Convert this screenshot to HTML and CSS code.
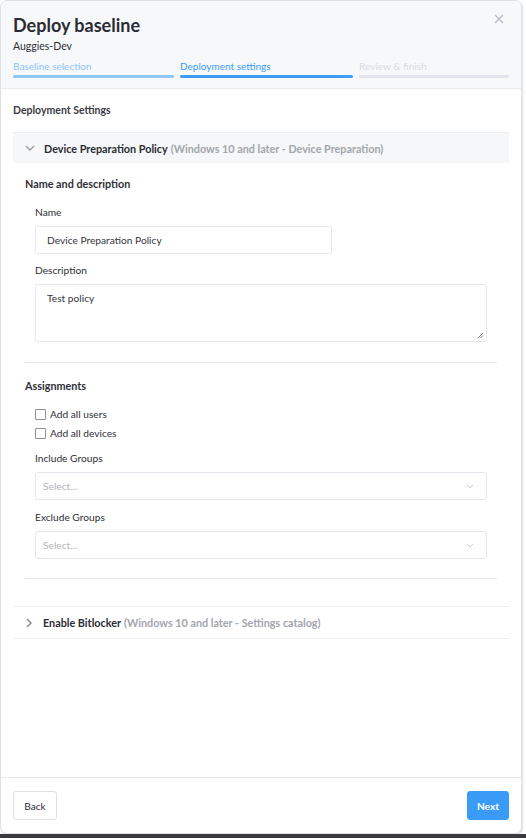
FILE: index.html
```html
<!DOCTYPE html>
<html>
<head>
<meta charset="utf-8">
<link rel="stylesheet" href="styles.css">
</head>
<body>
<div class="modal">
  <div class="modal-header">
    <button class="close" aria-label="Close">
      <svg width="10" height="10" viewBox="0 0 10 10"><path d="M1 1L9 9M9 1L1 9" stroke="#b9bcc4" stroke-width="1.3" fill="none"/></svg>
    </button>
    <h1 class="title">Deploy baseline</h1>
    <div class="subtitle">Auggies-Dev</div>
    <div class="steps">
      <div class="step done"><span>Baseline selection</span><i></i></div>
      <div class="step active"><span>Deployment settings</span><i></i></div>
      <div class="step todo"><span>Review &amp; finish</span><i></i></div>
    </div>
  </div>

  <div class="modal-body">
    <div class="section-title">Deployment Settings</div>

    <div class="accordion open">
      <div class="acc-head">
        <svg class="chev" width="10" height="6" viewBox="0 0 10 6"><path d="M1 1L5 5L9 1" stroke="#9a9ca3" stroke-width="1.4" fill="none"/></svg>
        <span class="acc-name">Device Preparation Policy</span>
        <span class="acc-type">(Windows 10 and later - Device Preparation)</span>
      </div>
      <div class="acc-body">
        <div class="group-title">Name and description</div>
        <div class="fields">
          <label class="label">Name</label>
          <div class="input name-input">Device Preparation Policy</div>
          <label class="label">Description</label>
          <div class="input textarea">Test policy
            <svg class="grip" width="7" height="7" viewBox="0 0 7 7"><path d="M6 1L1 6M6 3.5L3.5 6" stroke="#666" stroke-width="0.8"/></svg>
          </div>
        </div>
        <hr class="divider">
        <div class="group-title">Assignments</div>
        <div class="fields">
          <div class="checks">
            <label class="check"><span class="box"></span>Add all users</label>
            <label class="check"><span class="box"></span>Add all devices</label>
          </div>
          <label class="label">Include Groups</label>
          <div class="input select"><span>Select...</span>
            <svg width="8" height="5" viewBox="0 0 8 5"><path d="M1 1L4 4L7 1" stroke="#c8cad0" stroke-width="1" fill="none"/></svg>
          </div>
          <label class="label">Exclude Groups</label>
          <div class="input select"><span>Select...</span>
            <svg width="8" height="5" viewBox="0 0 8 5"><path d="M1 1L4 4L7 1" stroke="#c8cad0" stroke-width="1" fill="none"/></svg>
          </div>
        </div>
        <hr class="divider last">
      </div>
    </div>

    <div class="accordion closed">
      <div class="acc-head">
        <svg class="chev" width="10" height="10" viewBox="0 0 10 10"><path d="M3 1L7 5L3 9" stroke="#8c8e95" stroke-width="1.5" fill="none"/></svg>
        <span class="acc-name">Enable Bitlocker</span>
        <span class="acc-type">(Windows 10 and later - Settings catalog)</span>
      </div>
    </div>
  </div>

  <div class="modal-footer">
    <button class="btn btn-back">Back</button>
    <button class="btn btn-next">Next</button>
  </div>
</div>
<div class="backdrop-strip"></div>
</body>
</html>
```

FILE: styles.css
```css
* { box-sizing: border-box; }
html, body { margin: 0; padding: 0; }
body {
  background: #ffffff;
  font-family: Lato, "Noto Sans", sans-serif;
  color: #2e2f36;
  width: 526px;
  height: 838px;
  overflow: hidden;
  display: flex;
  flex-direction: column;
}
.modal {
  width: 522px;
  height: 834px;
  border: 1px solid #dfe0e5;
  border-radius: 7px;
  background: #fff;
  display: flex;
  flex-direction: column;
  overflow: hidden;
  box-shadow: 1px 1px 2px rgba(0,0,0,0.12);
}
.backdrop-strip {
  flex: 1;
  background: #3b3b3d;
}
.modal-header {
  position: relative;
  background: #f7f8fa;
  border-bottom: 1px solid #e9eaee;
  padding: 12px 12px 10px 12px;
}
.close {
  position: absolute;
  right: 17px;
  top: 13px;
  border: 0;
  background: transparent;
  padding: 0;
  width: 10px;
  height: 10px;
  display: flex;
}
.title {
  margin: 0;
  font-size: 18px;
  line-height: 24px;
  font-weight: 700;
  color: #2b2c33;
}
.subtitle {
  margin-top: 2px;
  font-size: 10.5px;
  line-height: 14px;
  color: #2e2f36;
}
.steps {
  display: flex;
  gap: 6px;
  margin-top: 6px;
}
.step {
  flex: 1 1 auto;
  display: flex;
  flex-direction: column;
  gap: 2px;
}
.step span {
  font-size: 10px;
  line-height: 14px;
  white-space: nowrap;
}
.step i {
  display: block;
  height: 3px;
  border-radius: 2px;
}
.step.done span { color: #8ec5fb; }
.step.done i { background: #8ec5fb; }
.step.active span { color: #3c9cf6; }
.step.active i { background: #3c9cf6; }
.step.todo span { color: #d9dae4; }
.step.todo i { background: #e3e4ee; }

.modal-body {
  flex: 1;
  padding: 14px 12px 0 12px;
}
.section-title {
  font-size: 10.5px;
  line-height: 14px;
  font-weight: 700;
  color: #3a3b42;
}
.accordion { margin-top: 15px; }
.accordion.closed { margin-top: 27px; border-top: 1px solid #eceef2; border-bottom: 1px solid #eceef2; }
.acc-head {
  display: flex;
  align-items: center;
  height: 31px;
  padding-left: 12px;
  font-size: 10.8px;
  white-space: nowrap;
}
.accordion.open .acc-head {
  background: #f6f7f9;
  border-top: 1px solid #eceef2;
}
.chev { margin-right: 9px; }
.accordion.closed .chev { margin-right: 9px; margin-left: -1px; }
.acc-name { font-weight: 700; color: #2b2c33; }
.acc-type { font-weight: 700; color: #a3a5ac; margin-left: 3px; }

.acc-body { padding: 14px 12px 0 12px; }
.group-title {
  font-size: 10.8px;
  line-height: 14px;
  font-weight: 700;
  color: #2e2f36;
}
.fields {
  padding: 0 10px;
  display: flex;
  flex-direction: column;
}
.label {
  display: block;
  font-size: 10.2px;
  line-height: 14px;
  margin-top: 14px;
  margin-bottom: 7px;
  color: #2e2f36;
}
.fields .input + .label { margin-top: 9px; }
.fields .select + .label { margin-top: 10px; }
.input {
  border: 1px solid #e6e7ee;
  border-radius: 3px;
  background: #fff;
  font-size: 10.2px;
  color: #34353c;
}
.name-input {
  width: 297px;
  height: 28px;
  display: flex;
  align-items: center;
  padding-left: 11px;
}
.textarea {
  position: relative;
  height: 58px;
  padding: 6px 11px;
  line-height: 14px;
}
.grip { position: absolute; right: 2px; bottom: 2px; }
.divider {
  border: 0;
  border-top: 1px solid #e3e4e9;
  margin: 20px 0 0 0;
}
.divider + .group-title { margin-top: 16px; }
.checks {
  margin-top: 14px;
  display: flex;
  flex-direction: column;
  gap: 5px;
}
.check {
  display: flex;
  align-items: center;
  font-size: 10.2px;
  line-height: 14px;
  color: #2e2f36;
}
.box {
  width: 11px;
  height: 11px;
  border: 1px solid #8e9097;
  border-radius: 1px;
  margin-right: 4px;
  background: #fff;
}
.checks + .label { margin-top: 11px; }
.select {
  height: 28px;
  display: flex;
  align-items: center;
  justify-content: space-between;
  padding: 0 12px 0 7px;
}
.select span { color: #b2b3b9; }
.divider.last { margin-top: 19px; }

.modal-footer {
  border-top: 1px solid #e7e8ec;
  padding: 13px 12px 13px 12px;
  display: flex;
  justify-content: space-between;
  align-items: center;
}
.btn {
  height: 29px;
  border-radius: 3px;
  font-family: Lato, "Noto Sans", sans-serif;
  font-size: 10.2px;
  padding: 0 8px;
  cursor: pointer;
}
.btn-back {
  width: 44px;
  background: #fff;
  border: 1px solid #dfe0e5;
  color: #2e2f36;
}
.btn-next {
  width: 42px;
  background: #3a9bf7;
  border: 1px solid #3a9bf7;
  color: #fff;
  font-weight: 700;
}
```
